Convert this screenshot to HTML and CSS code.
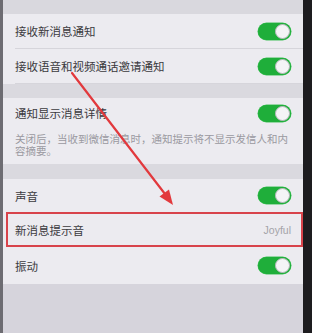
FILE: index.html
```html
<!DOCTYPE html>
<html>
<head>
<meta charset="utf-8">
<link rel="stylesheet" href="styles.css">
</head>
<body>
<div class="phone">
  <div class="screen">
    <div class="gap top"></div>
    <div class="group">
      <div class="row tall"><span class="label">接收新消息通知</span><span class="switch"></span></div>
      <div class="row tall"><span class="label">接收语音和视频通话邀请通知</span><span class="switch"></span></div>
    </div>
    <div class="gap"></div>
    <div class="group">
      <div class="row short"><span class="label">通知显示消息详情</span><span class="switch"></span></div>
      <p class="desc">关闭后，当收到微信消息时，通知提示将不显示发信人和内容摘要。</p>
    </div>
    <div class="gap mid"></div>
    <div class="group">
      <div class="row"><span class="label">声音</span><span class="switch"></span></div>
      <div class="row marked"><span class="label">新消息提示音</span><span class="value">Joyful</span></div>
      <div class="row last"><span class="label">振动</span><span class="switch"></span></div>
    </div>
    <svg class="arrow" width="312" height="333" viewBox="0 0 312 333">
      <line x1="72" y1="73" x2="165" y2="194" stroke="#e2393d" stroke-width="2.2" stroke-linecap="round"/>
      <polygon points="173,205 159.5,196.5 169,189.5" fill="#e2393d"/>
    </svg>
  </div>
  <div class="bezel"></div>
</div>
</body>
</html>
```
FILE: styles.css
```css
html, body {
  margin: 0;
  padding: 0;
}
body {
  background: #1d1c1f;
  font-family: "Noto Sans CJK SC", "Noto Sans", sans-serif;
  width: 312px;
  height: 333px;
  overflow: hidden;
}
.phone {
  display: flex;
  height: 333px;
  border-left: 3px solid #6d6c72;
}
.screen {
  position: relative;
  width: 300px;
  height: 333px;
  background: #d6d4dc;
}
.bezel {
  flex: 1;
  background: #1d1c1f;
}
.gap {
  height: 14px;
  background: #dad9df;
}
.gap.top {
  height: 14px;
  background: #d9d8de;
}
.gap.mid {
  height: 15px;
}
.group {
  background: #ecebf0;
  padding-left: 12px;
}
.row {
  display: flex;
  align-items: center;
  justify-content: space-between;
  height: 33px;
  padding-right: 12px;
  border-bottom: 1px solid #d6d5db;
  position: relative;
}
.row.tall {
  height: 34px;
}
.row.short {
  height: 30px;
  border-bottom: none;
}
.row.last {
  height: 37px;
  border-bottom: none;
}
.label {
  font-size: 11.5px;
  color: #3b3a3e;
  letter-spacing: 0;
}
.value {
  font-family: "Liberation Sans", sans-serif;
  font-size: 10.5px;
  color: #a4a3a8;
}
.switch {
  position: relative;
  width: 33px;
  height: 17px;
  border-radius: 9px;
  background: #1fae3a;
  box-shadow: 0 0 0 0.5px #42c25a;
}
.switch::after {
  content: "";
  position: absolute;
  right: 1px;
  top: 1px;
  width: 15px;
  height: 15px;
  border-radius: 50%;
  background: #f4f4f6;
  box-sizing: border-box;
  border: 1px solid #b9b8bd;
}
.desc {
  margin: 0;
  padding: 5px 14px 7px 0;
  font-size: 10.5px;
  line-height: 12px;
  color: #9a99a0;
}
.marked::after {
  content: "";
  position: absolute;
  left: -9px;
  right: 0;
  top: -1px;
  bottom: -1px;
  border: 2px solid #d8434b;
}
.arrow {
  position: absolute;
  left: -3px;
  top: 0;
  pointer-events: none;
}
```
